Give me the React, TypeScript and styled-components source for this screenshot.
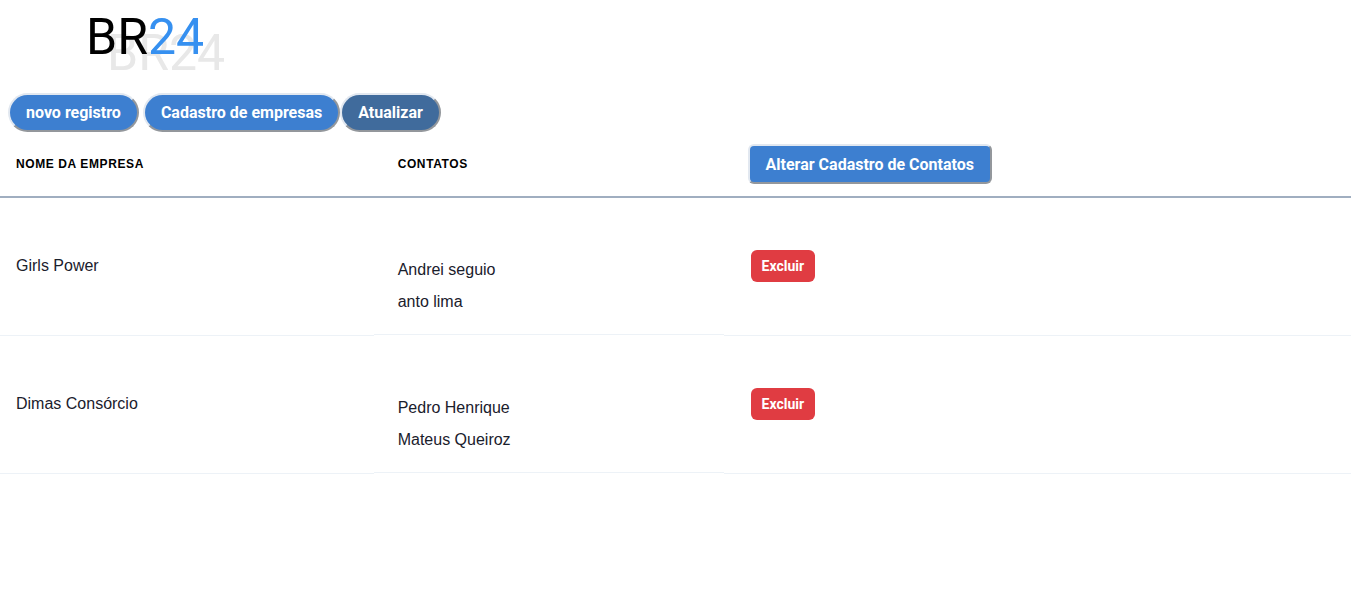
import styled, { createGlobalStyle } from "styled-components";

const GlobalStyle = createGlobalStyle`
  *, *::before, *::after { box-sizing: border-box; }
  body {
    margin: 0;
    background: #fff;
    color: #1a202c;
    font: 16px/24px "Liberation Sans", Arial, sans-serif;
  }
`;

const Logo = styled.h1`
  margin: 0;
  padding: 7px 0 0 86px;
  height: 93px;
  color: #000;
  font: 400 50px/60px Roboto, sans-serif;
  text-shadow: 21px 16px #e8e8e8;
`;

const LogoAccent = styled.span`
  color: #3690f0;
`;

const Toolbar = styled.nav`
  display: flex;
  gap: 4px;
  padding: 0 8px;
`;

const ButtonGroup = styled.div`
  display: flex;
`;

const ActionButton = styled.button<{ $tone?: string }>`
  height: 39px;
  padding: 0 16px;
  border: 2px outset #e2e8f0;
  border-radius: 20px;
  background: ${({ $tone = "#3d7fd0" }) => $tone};
  color: #fff;
  font: 700 16px/24px Roboto, sans-serif;
  white-space: nowrap;
  cursor: pointer;
`;

const EditButton = styled(ActionButton)`
  display: block;
  height: 40px;
  padding-top: 1px;
  border-radius: 6px;
`;

const DeleteButton = styled.button`
  display: block;
  height: 32px;
  margin-left: 3px;
  padding: 0 11px;
  border: 0;
  border-radius: 6px;
  background: #e03c42;
  color: #fff;
  font: 700 14px/20px Roboto, sans-serif;
  cursor: pointer;
`;

const Table = styled.table`
  width: 100%;
  border-collapse: separate;
  border-spacing: 0;
  table-layout: fixed;
`;

const HeadCell = styled.th<{ $width?: string }>`
  width: ${({ $width = "auto" }) => $width};
  padding: 12px 24px;
  border-bottom: 2px solid #a0aec0;
  color: #000;
  font-size: 12px;
  line-height: 16px;
  letter-spacing: 0.05em;
  text-align: left;
  text-transform: uppercase;

  &:first-child { padding-left: 16px; }
`;

const HeadActionCell = styled(HeadCell)`
  text-transform: none;
  letter-spacing: normal;
`;

const Cell = styled.td`
  padding: 16px 24px 18px;
  border-bottom: 1px solid #edf2f7;

  &:first-child { padding-left: 16px; }
`;

const ContactsCell = styled(Cell)`
  padding: 56px 24px 17px;
  border-bottom-color: transparent;
  box-shadow: inset 0 -1px #edf2f7;
`;

const ContactList = styled.ul`
  display: grid;
  margin: 0;
  padding: 0;
  list-style: none;
  line-height: 32px;
`;

const companies = [
  { name: "Girls Power", contacts: ["Andrei seguio", "anto lima"] },
  { name: "Dimas Consórcio", contacts: ["Pedro Henrique", "Mateus Queiroz"] },
];

export default function App() {
  return (
    <>
      <GlobalStyle />
      <header>
        <Logo>
          BR<LogoAccent>24</LogoAccent>
        </Logo>
        <Toolbar>
          <ButtonGroup>
            <ActionButton type="button">novo registro</ActionButton>
          </ButtonGroup>
          <ButtonGroup>
            <ActionButton type="button">Cadastro de empresas</ActionButton>
            <ActionButton type="button" $tone="#406b9c">Atualizar</ActionButton>
          </ButtonGroup>
        </Toolbar>
      </header>
      <main>
        <Table>
          <thead>
            <tr>
              <HeadCell scope="col" $width="27.66%">Nome da empresa</HeadCell>
              <HeadCell scope="col" $width="25.9%">Contatos</HeadCell>
              <HeadActionCell scope="col">
                <EditButton type="button">Alterar Cadastro de Contatos</EditButton>
              </HeadActionCell>
            </tr>
          </thead>
          <tbody>
            {companies.map(({ name, contacts }) => (
              <tr key={name}>
                <Cell>{name}</Cell>
                <ContactsCell>
                  <ContactList>
                    {contacts.map((contact) => (
                      <li key={contact}>{contact}</li>
                    ))}
                  </ContactList>
                </ContactsCell>
                <Cell>
                  <DeleteButton type="button">Excluir</DeleteButton>
                </Cell>
              </tr>
            ))}
          </tbody>
        </Table>
      </main>
    </>
  );
}
